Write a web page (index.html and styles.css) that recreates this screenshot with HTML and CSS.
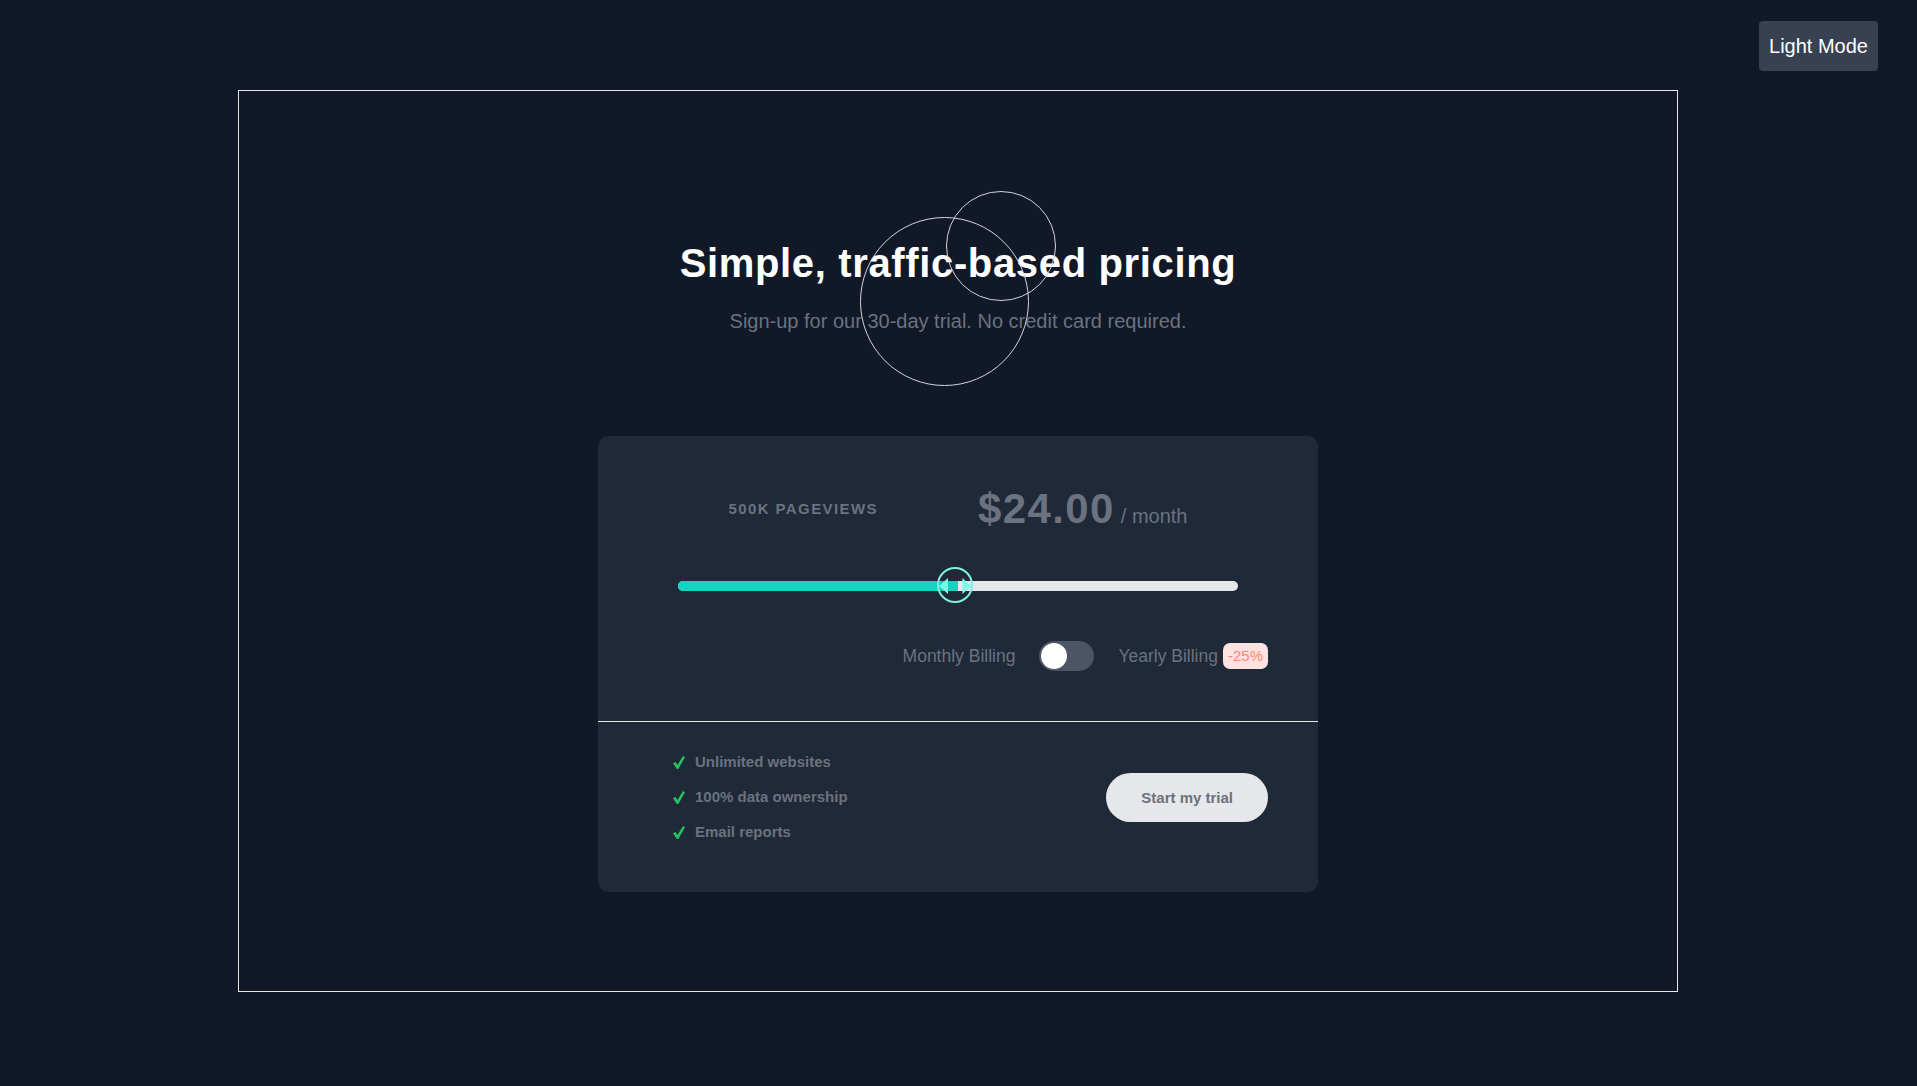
FILE: index.html
```html
<!DOCTYPE html>
<html lang="en">
<head>
<meta charset="utf-8">
<title>Interactive pricing component</title>
<link rel="stylesheet" href="styles.css">
</head>
<body>
<button class="theme-toggle" type="button">Light Mode</button>
<main class="frame">
  <header class="hero">
    <h1 class="title">Simple, traffic-based pricing</h1>
    <p class="subtitle">Sign-up for our 30-day trial. No credit card required.</p>
    <span class="ring ring-lg"></span>
    <span class="ring ring-sm"></span>
  </header>
  <section class="card">
    <div class="card-top">
      <div class="price-row">
        <span class="views">500K Pageviews</span>
        <span class="price"><span class="amount">$24.00</span><span class="period">/ month</span></span>
      </div>
      <div class="slider">
        <div class="track"><div class="fill" style="width:50%"></div></div>
        <svg class="thumb" width="36" height="36" viewBox="0 0 36 36" aria-hidden="true">
          <circle cx="18" cy="18" r="17" fill="none" stroke="#7ef2e2" stroke-width="2"/>
          <polygon points="2,19 11,11 11,27" fill="#7ef9e8"/>
          <polygon points="34.4,19 25.4,11 25.4,27" fill="#7ef9e8"/>
        </svg>
      </div>
      <div class="billing">
        <span class="billing-label">Monthly Billing</span>
        <span class="switch"><span class="knob"></span></span>
        <span class="billing-label">Yearly Billing</span>
        <span class="discount">-25%</span>
      </div>
    </div>
    <div class="card-bottom">
      <ul class="features">
        <li><svg class="check" width="12" height="13" viewBox="0 0 12 13" aria-hidden="true"><path d="M0 7.3 L2.5 5.9 L4.5 8.9 L10 0 L12 1.3 L5.3 12.9 L3.8 12.9 Z" fill="#22c55e"/></svg>Unlimited websites</li>
        <li><svg class="check" width="12" height="13" viewBox="0 0 12 13" aria-hidden="true"><path d="M0 7.3 L2.5 5.9 L4.5 8.9 L10 0 L12 1.3 L5.3 12.9 L3.8 12.9 Z" fill="#22c55e"/></svg>100% data ownership</li>
        <li><svg class="check" width="12" height="13" viewBox="0 0 12 13" aria-hidden="true"><path d="M0 7.3 L2.5 5.9 L4.5 8.9 L10 0 L12 1.3 L5.3 12.9 L3.8 12.9 Z" fill="#22c55e"/></svg>Email reports</li>
      </ul>
      <button class="cta" type="button">Start my trial</button>
    </div>
  </section>
</main>
</body>
</html>
```
FILE: styles.css
```css
* {
  box-sizing: border-box;
}

html,
body {
  margin: 0;
  padding: 0;
}

body {
  min-height: 100vh;
  background: #111827;
  font-family: "Liberation Sans", Arial, sans-serif;
  color: #6b7280;
  overflow: hidden;
}

.theme-toggle {
  position: fixed;
  top: 21px;
  right: 39px;
  height: 50px;
  padding: 0 10px;
  border: none;
  border-radius: 4px;
  background: #374151;
  color: #ffffff;
  font-family: "Liberation Sans", Arial, sans-serif;
  font-size: 20px;
  line-height: 24px;
  cursor: pointer;
}

.frame {
  width: 1440px;
  margin: 90px 0 0 calc(50% - 720.5px);
  padding: 148px 0 99px;
  border: 1px solid #e5e7eb;
}

.hero {
  position: relative;
  text-align: center;
}

.title {
  margin: 0;
  color: #ffffff;
  font-size: 40px;
  line-height: 48px;
  font-weight: 700;
  letter-spacing: 0.65px;
}

.subtitle {
  margin: 22px 0 0;
  color: #6b7280;
  font-size: 20px;
  line-height: 24px;
}

.ring {
  position: absolute;
  left: 50%;
  border: 1.3px solid #d1d5db;
  border-radius: 50%;
  pointer-events: none;
}

.ring-lg {
  top: -22px;
  width: 169px;
  height: 169px;
  margin-left: -98px;
}

.ring-sm {
  top: -48px;
  width: 110px;
  height: 110px;
  margin-left: -12px;
}

.card {
  width: 720px;
  margin: 103px auto 0;
  background: #1f2937;
  border-radius: 10px;
}

.card-top {
  padding: 48px 50px 50px;
}

.price-row {
  display: flex;
  justify-content: center;
  align-items: center;
  gap: 100px;
  height: 50px;
}

.views {
  font-size: 15px;
  line-height: 18px;
  font-weight: 700;
  letter-spacing: 1.4px;
  text-transform: uppercase;
  color: #6b7280;
}

.price {
  display: flex;
  align-items: baseline;
  gap: 6px;
  white-space: nowrap;
}

.amount {
  font-size: 42px;
  line-height: 50px;
  font-weight: 700;
  letter-spacing: 1.4px;
  color: #6b7280;
}

.period {
  font-size: 20px;
  line-height: 24px;
  color: #6b7280;
}

.slider {
  position: relative;
  display: flex;
  align-items: center;
  height: 36px;
  margin: 33px 30px 0;
}

.track {
  width: 100%;
  height: 10px;
  margin-top: 2px;
  border-radius: 5px;
  background: #e5e7eb;
  overflow: hidden;
}

.fill {
  height: 100%;
  background: #10d5c2;
}

.thumb {
  position: absolute;
  top: 0;
  left: calc(50% - 21px);
  display: block;
}

.billing {
  display: flex;
  justify-content: flex-end;
  align-items: center;
  height: 30px;
  margin-top: 38px;
  font-size: 17.5px;
  color: #6b7280;
}

.switch {
  display: flex;
  align-items: center;
  width: 55px;
  height: 30px;
  margin: 0 24px;
  padding: 2px;
  border-radius: 15px;
  background: #4b5563;
}

.knob {
  width: 26px;
  height: 26px;
  border-radius: 50%;
  background: #ffffff;
}

.discount {
  height: 26px;
  margin-left: 5px;
  padding: 0 5px;
  border-radius: 7px;
  background: #fee2e2;
  color: #fb8a6c;
  font-size: 15px;
  line-height: 26px;
}

.card-bottom {
  display: flex;
  justify-content: space-between;
  align-items: center;
  padding: 30px 50px 50px 75px;
  border-top: 1px solid #e5e7eb;
}

.features {
  display: flex;
  flex-direction: column;
  gap: 15px;
  margin: 0;
  padding: 0;
  list-style: none;
  font-size: 15px;
  line-height: 20px;
  font-weight: 700;
  color: #6b7280;
}

.features li {
  display: flex;
  align-items: center;
  gap: 10px;
}

.check {
  display: block;
  flex: none;
}

.cta {
  height: 49px;
  padding: 0 35px;
  border: none;
  border-radius: 25px;
  background: #e5e7eb;
  color: #6b7280;
  font-family: "Liberation Sans", Arial, sans-serif;
  font-size: 15px;
  font-weight: 700;
  cursor: pointer;
}
```
